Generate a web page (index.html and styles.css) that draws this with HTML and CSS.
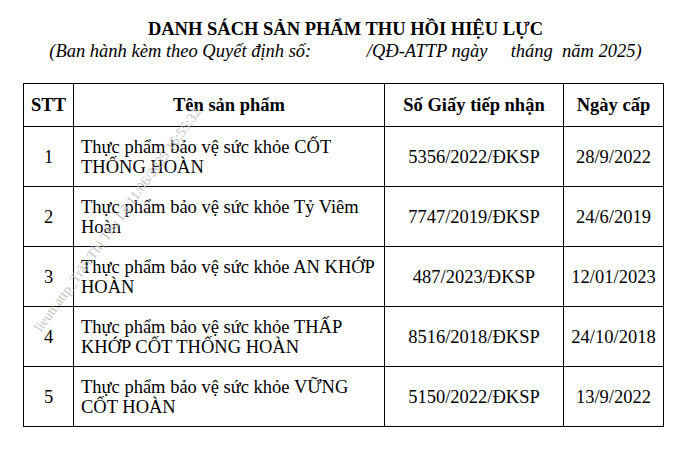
FILE: index.html
```html
<!DOCTYPE html>
<html lang="vi">
<head>
<meta charset="utf-8">
<title>Danh sách sản phẩm thu hồi hiệu lực</title>
<link rel="stylesheet" href="styles.css">
</head>
<body>
<div class="page">
  <h1 class="title">DANH SÁCH SẢN PHẨM THU HỒI HIỆU LỰC</h1>
  <p class="subtitle">(Ban hành kèm theo Quyết định số:            /QĐ-ATTP ngày     tháng  năm 2025)</p>
  <table class="list">
    <colgroup>
      <col class="c-stt"><col class="c-name"><col class="c-no"><col class="c-date">
    </colgroup>
    <thead>
      <tr><th>STT</th><th>Tên sản phẩm</th><th>Số Giấy tiếp nhận</th><th>Ngày cấp</th></tr>
    </thead>
    <tbody>
      <tr><td class="ctr">1</td><td class="name">Thực phẩm bảo vệ sức khỏe CỐT THỐNG HOÀN</td><td class="ctr">5356/2022/ĐKSP</td><td class="ctr">28/9/2022</td></tr>
      <tr><td class="ctr">2</td><td class="name">Thực phẩm bảo vệ sức khỏe Tỷ Viêm Hoàn</td><td class="ctr">7747/2019/ĐKSP</td><td class="ctr">24/6/2019</td></tr>
      <tr><td class="ctr">3</td><td class="name">Thực phẩm bảo vệ sức khỏe AN KHỚP HOÀN</td><td class="ctr">487/2023/ĐKSP</td><td class="ctr">12/01/2023</td></tr>
      <tr><td class="ctr">4</td><td class="name">Thực phẩm bảo vệ sức khỏe THẤP KHỚP CỐT THỐNG HOÀN</td><td class="ctr">8516/2018/ĐKSP</td><td class="ctr">24/10/2018</td></tr>
      <tr><td class="ctr">5</td><td class="name">Thực phẩm bảo vệ sức khỏe VỮNG CỐT HOÀN</td><td class="ctr">5150/2022/ĐKSP</td><td class="ctr">13/9/2022</td></tr>
    </tbody>
  </table>
  <div class="watermark">lieutt.attp_Trần Thị Thu Lê 11/06/2025 16:55:32</div>
</div>
</body>
</html>
```

FILE: styles.css
```css
html, body {
  margin: 0;
  padding: 0;
  background: #ffffff;
}
body {
  font-family: "Liberation Serif", "Times New Roman", serif;
  color: #000000;
}
.page {
  position: relative;
  width: 691px;
  height: 461px;
  padding-top: 18px;
  box-sizing: border-box;
}
.title {
  margin: 0;
  font-size: 18.5px;
  font-weight: bold;
  text-align: center;
  line-height: 22px;
}
.subtitle {
  margin: 0;
  font-size: 18.5px;
  font-style: italic;
  text-align: center;
  line-height: 22px;
  white-space: pre;
}
.list {
  margin: 21px 0 0 23px;
  border-collapse: collapse;
  width: 641px;
  table-layout: fixed;
  font-size: 18.5px;
}
.c-stt { width: 50px; }
.c-name { width: 311px; }
.c-no { width: 179px; }
.c-date { width: 100px; }
.list th, .list td {
  border: 1.3px solid #000000;
  vertical-align: middle;
  line-height: 20px;
}
.list th {
  height: 42px;
  padding: 0;
  font-weight: bold;
  text-align: center;
}
.list td {
  height: 59px;
  padding: 0;
}
.list td.ctr { text-align: center; }
.list td.name { padding: 0 5px 0 7px; text-align: left; }
.watermark {
  position: absolute;
  left: -62px;
  top: 212px;
  width: 360px;
  text-align: center;
  font-size: 14px;
  line-height: 16px;
  color: #c4c4c4;
  transform: rotate(-54deg);
  white-space: nowrap;
  pointer-events: none;
}
```
